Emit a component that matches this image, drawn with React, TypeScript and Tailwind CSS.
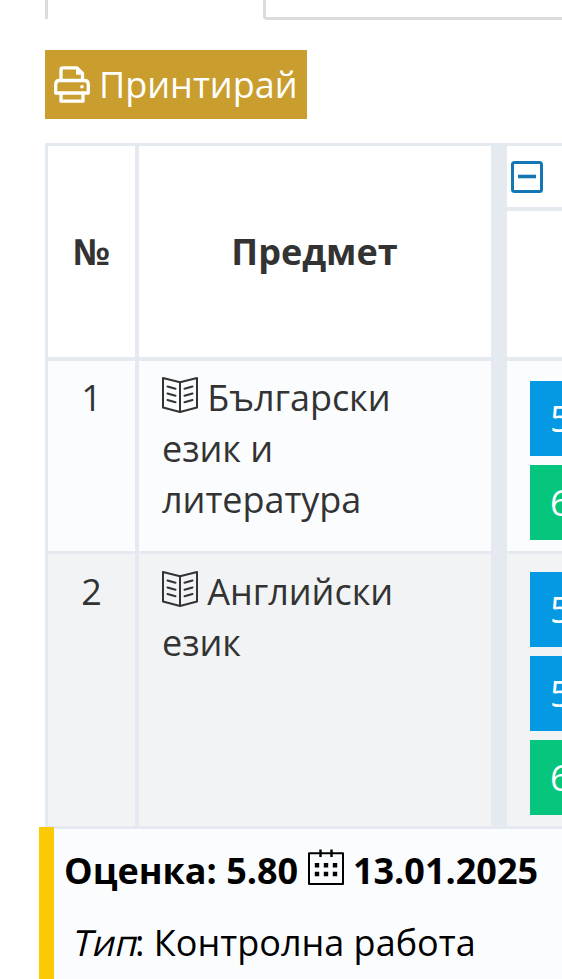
import React from 'react';

const rows = [
  { id: 1, subject: 'Български език и литература', grades: ['5', '6'], size: 'h-[190px] bg-[#fbfcfe]', pad: 'pt-[11px]', chips: 'pt-5' },
  { id: 2, subject: 'Английски език', grades: ['5', '5', '6'], size: 'h-[272px] bg-[#f2f3f5]', pad: 'pt-3', chips: 'pt-[18px]' },
];

function PrinterIcon() {
  return (
    <svg className="w-9 h-[37px] flex-shrink-0" viewBox="0 0 36 37" fill="none" stroke="currentColor" strokeWidth="3.3" strokeLinejoin="round">
      <path d="M7 15V3.5Q7 1.8 8.7 1.8H23L28.5 7.3V15" />
      <path d="M22.5 1.5V8.2H29L22.5 1.5Z" fill="currentColor" strokeWidth="1" />
      <path d="M7 27H1.7V18.5Q1.7 14.5 5.5 14.5H30.5Q34.3 14.5 34.3 18.5V27H29" />
      <path d="M7 27H29V35.2H7Z" />
      <circle cx="28" cy="20.8" r="1.8" fill="currentColor" stroke="none" />
    </svg>
  );
}

function BookIcon() {
  return (
    <svg className="inline-block align-baseline relative top-[2px] w-9 h-9" viewBox="0 0 36 36" fill="none" stroke="currentColor" strokeWidth="2" strokeLinejoin="round" strokeLinecap="round">
      <path d="M18 5.2L1 1V30.5L18 35L35 30.5V1Z" />
      <path d="M18 5.2V35" />
      <path d="M5.5 9.5L13.5 11.7M5.5 16.5L13.5 18.7M5.5 23L13.5 25.2M30.5 9.5L22.5 11.7M30.5 16.5L22.5 18.7M30.5 23L22.5 25.2" />
    </svg>
  );
}

function CalendarIcon() {
  return (
    <svg className="inline-block align-baseline relative top-[1px] w-9 h-9" viewBox="0 0 36 36" fill="none" stroke="currentColor" strokeWidth="2" strokeLinejoin="round">
      <path d="M1 4.2H35V35H1Z" />
      <path d="M12.5 0.5V8M23.5 0.5V8" strokeWidth="2.4" />
      <path d="M6.8 16.2H11.2M15.8 16.2H20.2M24.8 16.2H29.2M6.8 25H11.2M15.8 25H20.2M24.8 25H29.2" strokeWidth="4.4" />
    </svg>
  );
}

export default function App() {
  return (
    <div className="w-[562px] h-[979px] overflow-hidden bg-white text-[#333] text-[36px] leading-[51px] font-['Open_Sans','Noto_Sans',sans-serif]">
      <div className="flex h-5 pl-[45px]">
        <div className="w-[218px] h-[19px] border-l-[3px] border-[#dcdcdc]" />
        <div className="flex-1 h-5 border-l-[3px] border-b-[3px] rounded-bl-[4px] border-[#dcdcdc]" />
      </div>

      <button className="flex items-center mt-[30px] ml-[45px] w-[262px] h-[69px] pl-[9px] gap-[9px] bg-[#c99d2e] text-white whitespace-nowrap">
        <PrinterIcon />
        <span>Принтирай</span>
      </button>

      <div className="mt-6 ml-[45px] pl-[3px] pt-[3px] bg-[#e5eaf1]">
        <div className="flex h-[211px] mb-1 font-bold">
          <div className="w-[87px] mr-1 flex items-center justify-center bg-white">№</div>
          <div className="w-[352px] mr-4 pr-px flex items-center justify-center bg-white">Предмет</div>
          <div className="flex-1 flex flex-col gap-1">
            <div className="h-[61px] pl-1 pt-[15px] bg-white">
              <svg className="w-8 h-8 text-[#1277b3]" viewBox="0 0 32 32" fill="none" stroke="currentColor" strokeWidth="3">
                <rect x="1.5" y="1.5" width="29" height="29" rx="2" />
                <path d="M7 15.5H25" strokeWidth="3.6" />
              </svg>
            </div>
            <div className="flex-1 bg-white" />
          </div>
        </div>

        {rows.map((row) => (
          <div key={row.id} className="flex pb-[3px]">
            <div className={`w-[87px] mr-1 text-center ${row.size} ${row.pad}`}>{row.id}</div>
            <div className={`w-[352px] mr-4 pl-[23px] pr-[60px] tracking-[-0.05px] ${row.size} ${row.pad}`}>
              <BookIcon /> {row.subject}
            </div>
            <div className={`flex-1 min-w-0 pl-[23px] flex flex-col gap-[9px] overflow-hidden ${row.size} ${row.chips}`}>
              {row.grades.map((grade, i) => (
                <div key={i} className={`w-[75px] h-[75px] flex-shrink-0 pl-5 flex items-center text-white ${grade === '6' ? 'bg-[#06c67d]' : 'bg-[#0599e3]'}`}>
                  {grade}
                </div>
              ))}
            </div>
          </div>
        ))}
      </div>

      <div className="relative -mt-[2px] pt-[2px] ml-[39px] h-[154px] border-l-[15px] border-[#fbca04] text-black">
        <div className="h-full pt-4 pl-[10px] bg-[#fbfcfe] whitespace-nowrap">
          <div className="font-bold">
            Оценка: 5.80 <CalendarIcon /> 13.01.2025
          </div>
          <div className="pl-[10px] mt-[21px]">
            <em className="not-italic inline-block -mr-1 -skew-x-[13deg]">Тип</em>: Контролна работа
          </div>
        </div>
      </div>
    </div>
  );
}
